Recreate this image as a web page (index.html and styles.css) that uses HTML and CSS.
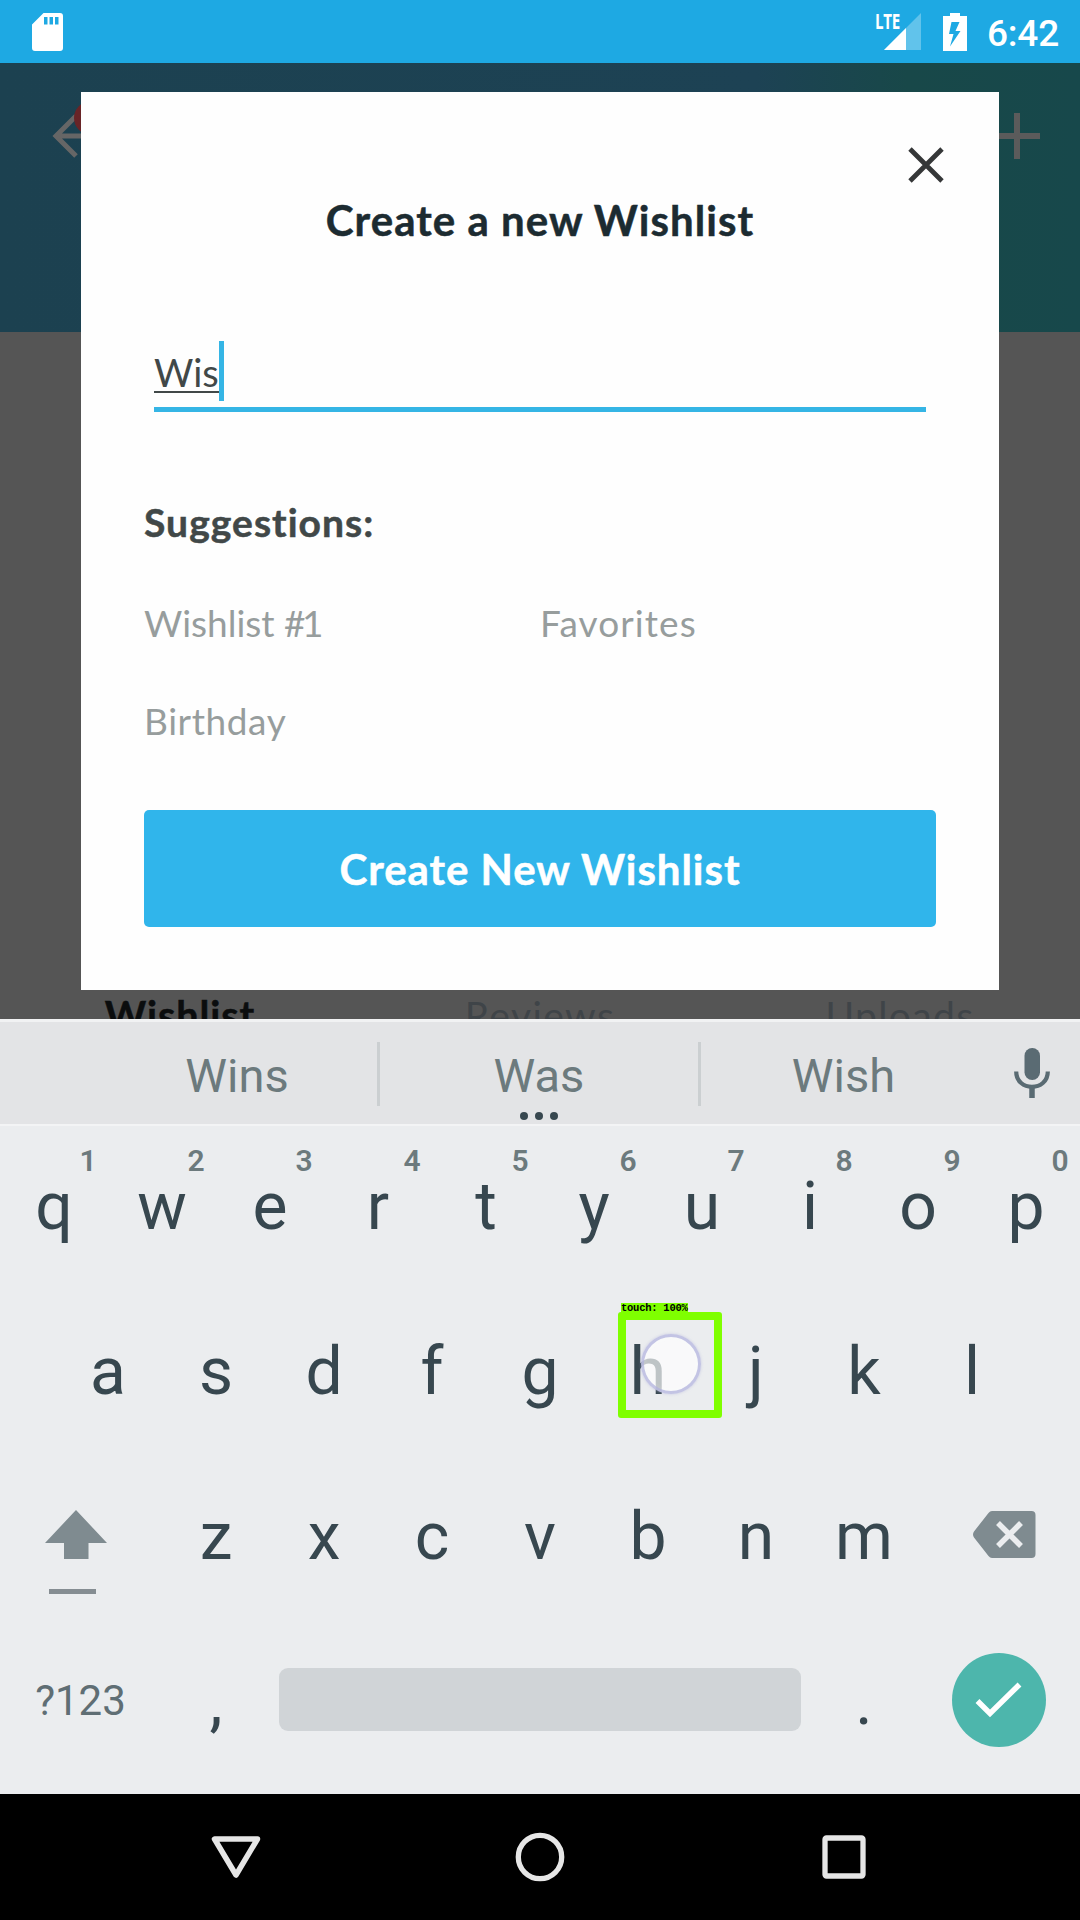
FILE: index.html
```html
<!DOCTYPE html>
<html lang="en">
<head>
<meta charset="utf-8">
<title>Create a new Wishlist</title>
<link rel="stylesheet" href="styles.css">
</head>
<body>
<div class="screen">
  <header class="status">
    <svg class="status-sd" width="31" height="38" viewBox="0 0 31 38"><path fill="#fff" fill-rule="evenodd" d="M11.500 0H28a3 3 0 0 1 3 3V35a3 3 0 0 1-3 3H3a3 3 0 0 1-3-3V11.500ZM12 4v7.500h3.500V4ZM17.500 4v7.500H21V4ZM23 4v7.500h3.500V4Z"/></svg>
    <div class="signal">
      <span class="lte">LTE</span>
      <svg width="37" height="37" viewBox="0 0 37 37"><path fill="#fff" opacity=".3" d="M37 0V37H0Z"/><path fill="#fff" d="M22 15V37H0Z"/></svg>
    </div>
    <svg class="battery" width="24" height="38" viewBox="0 0 24 38"><path fill="#fff" fill-rule="evenodd" d="M7 0H17V3H24V38H0V3H7ZM8.500 9 6 21H10.500L7 33.500 17.500 18H12.500L16.500 9Z"/></svg>
    <span class="clock">6:42</span>
  </header>

  <main class="app">
    <div class="app-header">
      <span class="back">
        <svg width="46" height="48" viewBox="0 0 46 48"><path fill="none" stroke="#666" stroke-width="5" d="M24 4 4 24 24 44M4 24H46"/></svg>
        <i class="badge"></i>
      </span>
      <svg width="46" height="46" viewBox="0 0 46 46"><path fill="none" stroke="#5b5b5b" stroke-width="6" d="M23 0V46M0 23H46"/></svg>
    </div>
    <nav class="tabs">
      <span class="tab tab-active">Wishlist</span>
      <span class="tab">Reviews</span>
      <span class="tab">Uploads</span>
    </nav>
    <section class="modal">
      <div class="modal-close">
        <svg width="36" height="36" viewBox="0 0 36 36"><path fill="none" stroke="#353738" stroke-width="4.800" d="M2 2 34 34M34 2 2 34"/></svg>
      </div>
      <h1 class="modal-title">Create a new Wishlist</h1>
      <div class="field"><span class="field-text">Wis</span><i class="caret"></i></div>
      <h2 class="sub">Suggestions:</h2>
      <div class="options">
        <span>Wishlist <span class="num">#1</span></span>
        <span class="loose">Favorites</span>
        <span class="mid">Birthday</span>
      </div>
      <div class="create">Create New Wishlist</div>
    </section>
  </main>

  <section class="keyboard">
    <div class="strip">
      <span class="word">Wins</span>
      <span class="word word-mid">Was<svg class="dots" width="40" height="10" viewBox="0 0 40 10"><g fill="#37474f"><circle cx="5" cy="5" r="4"/><circle cx="20" cy="5" r="4"/><circle cx="35" cy="5" r="4"/></g></svg></span>
      <span class="word word-last">Wish</span>
      <svg class="mic" width="36" height="50" viewBox="0 0 36 50"><rect x="10.500" y="0" width="15.500" height="32" rx="7.700" fill="#5a6b73"/><path fill="none" stroke="#5a6b73" stroke-width="4.200" d="M2.200 23.500C2.200 44 33.800 44 33.800 23.500"/><path stroke="#5a6b73" stroke-width="5.500" d="M18 38V50"/></svg>
    </div>
    <div class="row">
      <span class="key">q<b>1</b></span><span class="key">w<b>2</b></span><span class="key">e<b>3</b></span><span class="key">r<b>4</b></span><span class="key">t<b>5</b></span><span class="key">y<b>6</b></span><span class="key">u<b>7</b></span><span class="key">i<b>8</b></span><span class="key">o<b>9</b></span><span class="key">p<b>0</b></span>
    </div>
    <div class="row">
      <span class="key">a</span><span class="key">s</span><span class="key">d</span><span class="key">f</span><span class="key">g</span><span class="key">h
        <span class="touch"><em class="touch-label">touch: 100%</em><i class="touch-dot"></i></span></span><span class="key">j</span><span class="key">k</span><span class="key">l</span>
    </div>
    <div class="row">
      <span class="key key-wide key-shift">
        <svg width="62" height="84" viewBox="0 0 62 84"><path fill="#7f8b90" d="M31 0 62 33H43.500V49H19V33H0Z"/><rect x="4" y="79" width="47" height="5" fill="#858d92"/></svg>
      </span>
      <span class="key">z</span><span class="key">x</span><span class="key">c</span><span class="key">v</span><span class="key">b</span><span class="key">n</span><span class="key">m</span>
      <span class="key key-wide key-del">
        <svg width="63" height="47" viewBox="0 0 63 47"><path fill="#7f8b90" d="M19 0H58.500a4 4 0 0 1 4 4V43a4 4 0 0 1-4 4H19Q17 47 15.500 45L1 26.500Q-1 23.500 1 20.500L15.500 2Q17 0 19 0Z"/><path stroke="#ebedef" stroke-width="5.500" d="M25 12 48 35M48 12 25 35"/></svg>
      </span>
    </div>
    <div class="row">
      <span class="key key-wide key-sym">?123</span>
      <span class="key">,</span>
      <span class="space"></span>
      <span class="key">.</span>
      <span class="key key-wide key-done">
        <svg width="94" height="94" viewBox="0 0 94 94"><circle cx="47" cy="47" r="47" fill="#4db6ac"/><path fill="none" stroke="#fff" stroke-width="5.500" d="M25.500 48 38 60.500 67.500 31.500"/></svg>
      </span>
    </div>
  </section>

  <footer class="navbar">
    <svg width="50" height="44" viewBox="0 0 50 44"><path fill="none" stroke="#e6e6e6" stroke-width="5.500" stroke-linejoin="round" d="M3.500 4H46.500L25 40Z"/></svg>
    <svg width="50" height="50" viewBox="0 0 50 50"><circle cx="25" cy="25" r="21.700" fill="none" stroke="#e6e6e6" stroke-width="5.300"/></svg>
    <svg width="46" height="46" viewBox="0 0 46 46"><rect x="4" y="4" width="38" height="38" rx="1.500" fill="none" stroke="#e6e6e6" stroke-width="5.300"/></svg>
  </footer>
</div>
</body>
</html>
```
FILE: styles.css
```css
* { box-sizing: border-box; }
body { margin: 0; background: #000; }
svg { display: block; flex: none; }

.screen {
  width: 1080px;
  height: 1920px;
  display: grid;
  grid-template-rows: 63px 956px 775px 126px;
  overflow: hidden;
  font-family: Roboto, sans-serif;
}

/* Status bar */
.status {
  display: flex;
  align-items: center;
  padding: 0 21px 0 32px;
  background: #1ea9e3;
  color: #fff;
}
.signal {
  position: relative;
  margin-left: auto;
  margin-right: 22px;
}
.lte {
  position: absolute;
  left: -9px;
  top: -1px;
  font: 700 21px/18px "Open Sans", sans-serif;
  letter-spacing: -.4px;
  transform: scaleX(.72);
  transform-origin: left;
}
.battery { margin-right: 20px; }
.clock {
  font-size: 37px;
  font-weight: 500;
  line-height: 63px;
  letter-spacing: -.2px;
  padding-top: 3px;
}

/* Dimmed application behind the dialog */
.app {
  position: relative;
  display: flex;
  flex-direction: column;
  justify-content: space-between;
  overflow: hidden;
  background: #555;
  font-family: Lato, sans-serif;
}
.app-header {
  height: 269px;
  display: flex;
  justify-content: space-between;
  align-items: flex-start;
  padding: 50px 40px 0 52px;
  background: linear-gradient(90deg, #1c4150 0%, #1d4254 70%, #184849 84%, #17484b 100%);
}
.back {
  position: relative;
  margin-top: -1px;
}
.badge {
  position: absolute;
  left: 22px;
  top: -11px;
  width: 34px;
  height: 34px;
  border-radius: 50%;
  background: #682427;
}
.tabs {
  height: 23px;
  display: grid;
  grid-template-columns: repeat(3, 360px);
  line-height: 38px;
}
.tab {
  font-size: 39px;
  letter-spacing: 1.4px;
  text-align: center;
  color: #3f4448;
}
.tab-active {
  font-size: 39.5px;
  font-weight: 700;
  letter-spacing: .95px;
  -webkit-text-stroke: .5px;
  color: #0b0d0e;
}

/* Dialog */
.modal {
  position: absolute;
  left: 81px;
  top: 29px;
  width: 918px;
  height: 898px;
  display: flex;
  flex-direction: column;
  background: #fefefe;
}
.modal-close {
  display: flex;
  justify-content: flex-end;
  padding: 55px 55px 10px 0;
}
.modal-title {
  margin: 0;
  text-align: center;
  font-size: 42px;
  line-height: 54px;
  letter-spacing: 1.05px;
  -webkit-text-stroke: .5px;
  color: #1c2b31;
}
.field {
  display: flex;
  height: 71px;
  margin: 94px 73px 0;
  border-bottom: 5px solid #35b5e5;
}
.field-text {
  height: 52px;
  width: 65px;
  border-bottom: 2px solid #414848;
  font-size: 38px;
  line-height: 63px;
  color: #414848;
  white-space: nowrap;
}
.caret {
  width: 5px;
  height: 60px;
  background: #35b5e5;
}
.sub {
  margin: 80px 63px 0;
  font-size: 39px;
  line-height: 60px;
  letter-spacing: 1.05px;
  -webkit-text-stroke: .5px;
  color: #414848;
}
.options {
  display: grid;
  grid-template-columns: 396px 396px;
  margin: 21px 63px 0;
  font-size: 37px;
  line-height: 99px;
  grid-auto-rows: 98px;
  color: #979d9d;
}
.num { letter-spacing: -3.5px; }
.loose { letter-spacing: 1.1px; }
.mid { letter-spacing: .6px; }
.create {
  height: 117px;
  margin: 41px 63px 0;
  border-radius: 5px;
  background: #30b5eb;
  color: #fff;
  text-align: center;
  font-size: 42px;
  font-weight: 700;
  line-height: 118px;
  letter-spacing: .95px;
  -webkit-text-stroke: .5px;
}

/* Keyboard */
.keyboard {
  display: flex;
  flex-direction: column;
  background: #ebedef;
  color: #37474f;
}
.strip {
  height: 107px;
  display: grid;
  grid-template-columns: 144px 236px 321px 285px 94px;
  align-items: center;
  border-top: 3px solid #f1f2f3;
  border-bottom: 2px solid #f3f4f5;
  background: #e3e4e6;
  color: #6c7a7d;
}
.word {
  grid-column: 2;
  height: 64px;
  margin-top: 2px;
  font-size: 47px;
  line-height: 67px;
  padding-right: 47px;
  text-align: center;
  border-right: 3px solid #cbcfd1;
}
.word-mid {
  position: relative;
  grid-column: 3;
  padding: 0;
}
.word-last {
  grid-column: 4;
  padding: 0;
  border: 0;
}
.dots {
  position: absolute;
  left: 139px;
  top: 69px;
}
.mic { margin-left: 28px; }

.row {
  height: 165px;
  display: flex;
  justify-content: center;
}
.row:nth-child(2) { height: 162px; padding-bottom: 2px; }
.key {
  position: relative;
  width: 108px;
  display: flex;
  align-items: center;
  justify-content: center;
  padding-top: 1px;
  font-size: 66px;
}
.key b {
  position: absolute;
  left: 73px;
  width: 30px;
  top: 17px;
  text-align: center;
  font-size: 30px;
  line-height: 35px;
  font-weight: 600;
  color: #6c7a7d;
}
.key-wide { width: 162px; }
.key-shift, .key-del { align-items: flex-start; }
.key-shift { padding: 57px 11px 0 0; }
.key-del { padding: 58px 0 0 11px; }
.key-sym {
  padding: 0 1px 0 0;
  font-size: 42px;
  color: #5f6e74;
}
.key-done { padding: 0 0 1px; }
.space {
  width: 522px;
  height: 63px;
  margin: 50px 9px 0;
  border-radius: 9px;
  background: #d0d4d7;
}

/* Detected touch over a key */
.touch {
  position: absolute;
  left: 24px;
  top: 24px;
  width: 104px;
  height: 106px;
  border: 8px solid #7fff00;
  border-radius: 3px;
}
.touch-label {
  position: absolute;
  left: -5px;
  top: -17px;
  height: 11px;
  width: 67px;
  background: #7fff00;
  color: #000;
  font: 700 10.500px/11px "Liberation Mono", monospace;
  letter-spacing: -.25px;
  white-space: nowrap;
}
.touch-dot {
  position: absolute;
  left: 15px;
  top: 14px;
  width: 60px;
  height: 60px;
  border-radius: 50%;
  border: 3px solid rgba(176, 178, 220, .75);
  box-shadow: 0 0 3px rgba(176, 178, 220, .6);
  background: radial-gradient(circle, rgba(255, 255, 255, .68) 60%, rgba(255, 255, 255, .78) 100%);
}

/* System navigation */
.navbar {
  display: grid;
  grid-template-columns: repeat(3, 304px);
  justify-content: center;
  justify-items: center;
  align-items: center;
  background: #000;
}
```
